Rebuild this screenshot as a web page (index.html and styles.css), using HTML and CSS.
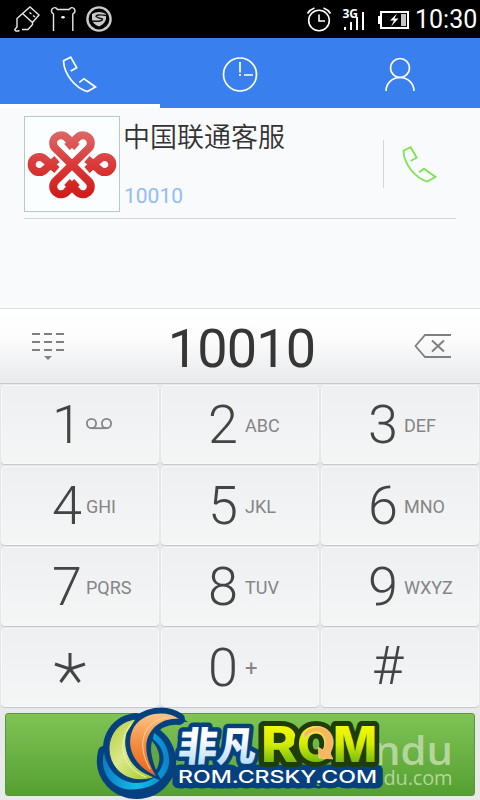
FILE: index.html
```html
<!DOCTYPE html>
<html lang="zh-CN">
<head>
  <meta charset="UTF-8" />
  <meta name="viewport" content="width=device-width, initial-scale=1.0"/>
  <title>Phone</title>
  <link rel="stylesheet" href="styles.css">
</head>
<body>

  <div class="status-bar">
    <svg class="notifications" width="114" height="38" viewBox="0 0 114 38" fill="none" stroke="#e8e8e8" stroke-width="1.4">
      <!-- usb -->
      <path d="M22.5 13.5 L30 7 L39 15 L32.500 22.500 Z M29.500 12.500 l2 1.500 M33 15.500 l2 1.500 M22.500 13.500 L17 18.500 V27 L14.800 29.500 Q15 32 19.500 30.500 M32.500 22.500 V24.500 L28 29.500 H22"/>
      <!-- bear -->
      <path d="M53.500 31 V14 Q50.500 12 52 9 Q55 6 57.500 9.500 H69 Q72 6 74.500 9 Q76 12 72.800 14 V31"/>
      <ellipse cx="63" cy="17.300" rx="1.800" ry="1.200" fill="#fff" stroke="none"/>
      <circle cx="99" cy="19" r="11.600" stroke="#c9c9c9" stroke-width="2.400"/>
      <path d="M92 14 Q99 10 106 14 V19 Q105 24 99 26.500 Q93 24 92 20 Z" fill="#c9c9c9" stroke="none"/>
      <path d="M106.500 15.500 Q96 14 96 16.500 Q98 18 102.500 19 Q103 22 91.500 21" stroke="#111" stroke-width="1.300"/>
    </svg>
    <svg class="system" width="100" height="38" viewBox="312 0 100 38" fill="none" stroke="#fff" stroke-width="1.600">
      <circle cx="319" cy="20.500" r="10.300"/>
      <path d="M319 14.500 V21 H325 M307.500 13.500 Q310 9.500 314.500 8 M323.500 8 Q328 9.500 330.500 13.500"/>
      <text class="network" x="342.500" y="18">3G</text>
      <path d="M345 27 V30 M351 22 V30 M357 17 V30 M363 12 V30" stroke-width="2"/>
      <path d="M381 12 H408 V28 H381 Z" stroke-width="2"/>
      <path d="M379.500 16 V24" stroke-width="3"/>
      <path d="M401 14 H406 V26 H401 Z" fill="#c4c4c4" stroke="none"/>
      <path d="M397 13.500 L390 20.500 H394 L391 26.500 L398.500 18.500 H394.500 Z" fill="#fff" stroke="none"/>
    </svg>
    <span class="time">10:30</span>
  </div>

  <div class="tabs">
    <div class="tab active">
      <svg width="36" height="38" viewBox="0 0 36 38"><path d="M8.700 15 L14.700 11.700 L8.700 1.200 L1.500 4.700 C2 18 13 32 25.300 35.500 L33.500 31 L22 22.700 L17.300 26.300"/></svg>
    </div>
    <div class="tab">
      <svg width="36" height="38" viewBox="0 0 36 38"><circle cx="18" cy="18.500" r="16.500"/><path d="M18 6 V16.500 M18 18 V20 M22 19 H31"/></svg>
    </div>
    <div class="tab">
      <svg width="36" height="38" viewBox="0 0 36 38"><circle cx="18" cy="12" r="9.500"/><path d="M4 35 A14 13.500 0 0 1 32 35"/></svg>
    </div>
  </div>

  <div class="contacts">
    <div class="contact">
      <svg class="avatar" width="94" height="94" viewBox="1 1 94 94" fill="none">
        <defs>
          <linearGradient id="red" gradientUnits="userSpaceOnUse" x1="0" y1="14" x2="0" y2="82">
            <stop offset="0" stop-color="#dd6a6a"/>
            <stop offset="0.500" stop-color="#da3a3a"/>
            <stop offset="1" stop-color="#d01a16"/>
          </linearGradient>
        </defs>
        <g stroke="url(#red)" stroke-width="8" stroke-linejoin="round">
          <path d="M31 32 A7.800 7.800 0 1 1 43 22 L53 31"/>
          <path d="M65 32 A7.800 7.800 0 1 0 53 22 L43 31"/>
          <path d="M31 65.500 A7.800 7.800 0 1 0 43 75.500 L53 66"/>
          <path d="M65 65.500 A7.800 7.800 0 1 1 53 75.500 L43 66"/>
          <path d="M33 54 L21 43.500 A7.600 7.600 0 1 0 21 53.500 L33 43"/>
          <path d="M63 54 L75 43.500 A7.600 7.600 0 1 1 75 53.500 L63 43"/>
        </g>
        <path d="M34 34 L62 63 M62 34 L34 63" stroke="#fbfefe" stroke-width="10.500"/>
        <path d="M30.500 31.500 L65.500 66 M65.500 31.500 L30.500 66" stroke="url(#red)" stroke-width="8"/>
      </svg>
      <div class="info">
        <div class="name">中国联通客服</div>
        <div class="number">10010</div>
      </div>
      <div class="call-icon">
        <svg width="36" height="38" viewBox="0 0 36 38"><path d="M8.700 15 L14.700 11.700 L8.700 1.200 L1.500 4.700 C2 18 13 32 25.300 35.500 L33.500 31 L22 22.700 L17.300 26.300"/></svg>
      </div>
    </div>
  </div>

  <div class="display">
    <svg width="34" height="30" viewBox="0 0 34 30">
      <path d="M0 3 H33 M0 11 H33 M0 19 H33" stroke="#808080" stroke-width="2" stroke-dasharray="8 4"/>
      <path d="M12 25 H20 L16 29 Z" fill="#808080"/>
    </svg>
    <span class="dialed">10010</span>
    <svg width="38" height="26" viewBox="0 0 38 26" fill="none" stroke="#808080" stroke-width="1.800">
      <path d="M37 2 H11 L1.500 13 L11 24 H37"/>
      <path d="M18 7.500 L30 18.500 M30 7.500 L18 18.500" stroke-width="2"/>
    </svg>
  </div>

  <div class="keypad">
    <div class="key"><b>1</b>
      <svg class="voicemail" width="26" height="12" viewBox="0 0 26 12"><circle cx="5.500" cy="5.500" r="4.600"/><circle cx="20.500" cy="5.500" r="4.600"/><path d="M5.500 10.200 H20.500"/></svg>
    </div>
    <div class="key"><b>2</b><span>ABC</span></div>
    <div class="key"><b>3</b><span>DEF</span></div>
    <div class="key"><b>4</b><span>GHI</span></div>
    <div class="key"><b>5</b><span>JKL</span></div>
    <div class="key"><b>6</b><span>MNO</span></div>
    <div class="key"><b>7</b><span>PQRS</span></div>
    <div class="key"><b>8</b><span>TUV</span></div>
    <div class="key"><b>9</b><span>WXYZ</span></div>
    <div class="key">
      <svg class="star" width="32" height="32" viewBox="0 0 32 32"><path d="M16 17 V1 M16 17 L1 12 M16 17 L31 12 M16 17 L6.500 30 M16 17 L25.500 30"/></svg>
    </div>
    <div class="key"><b>0</b><span class="plus">+</span></div>
    <div class="key hash"><b>#</b></div>
  </div>

  <div class="call-row">
    <div class="call-button">
      <svg class="site" width="80" height="60" viewBox="375 732 80 60">
        <text class="site-name" x="375" y="765.500" textLength="79" lengthAdjust="spacingAndGlyphs">ndu</text>
        <text class="site-url" x="384.500" y="786" textLength="69">du.com</text>
      </svg>
    </div>
    <svg class="logo" width="290" height="96" viewBox="95 704 290 96">
      <defs>
        <linearGradient id="lime" x1="0" y1="0" x2="1" y2="1">
          <stop offset="0" stop-color="#b4cc3c"/>
          <stop offset="0.450" stop-color="#dbe88c"/>
          <stop offset="1" stop-color="#9cc516"/>
        </linearGradient>
        <linearGradient id="orange" x1="0.500" y1="0" x2="0.500" y2="1">
          <stop offset="0" stop-color="#fcc487"/>
          <stop offset="0.500" stop-color="#f38b3c"/>
          <stop offset="1" stop-color="#e8641c"/>
        </linearGradient>
        <linearGradient id="blue" x1="0" y1="0" x2="1" y2="0">
          <stop offset="0" stop-color="#0b7dc6"/>
          <stop offset="0.500" stop-color="#12bce6"/>
          <stop offset="1" stop-color="#0a82cc"/>
        </linearGradient>
        <linearGradient id="yellow" gradientUnits="userSpaceOnUse" x1="0" y1="726" x2="0" y2="762">
          <stop offset="0" stop-color="#f4f808"/>
          <stop offset="0.500" stop-color="#d4ec04"/>
          <stop offset="1" stop-color="#78bc10"/>
        </linearGradient>
        <linearGradient id="ice" gradientUnits="userSpaceOnUse" x1="0" y1="-36" x2="0" y2="3">
          <stop offset="0.300" stop-color="#ffffff"/>
          <stop offset="1" stop-color="#b9ddf5"/>
        </linearGradient>
      </defs>

      <!-- crescents -->
      <g stroke="#06417f" stroke-width="12" stroke-linejoin="round">
        <path d="M104 752 C98 776 117 793 137 793 C158 793 172 775 170 758 C168 746 162 738 154 733 L153 739 C162 746 165 755 163 763 C159 778 146 786 134 785 C119 783 107 771 104 752 Z"/>
        <path d="M136 719 C112 722 103 746 113 764 C123 781 142 783 158 776 C137 776 121 755 127 733 Z"/>
        <path d="M179 719 C166 710 144 712 134 727 C123 748 137 768 156 776 C146 760 143 744 150 733 C156 723 167 718 179 719 Z"/>
      </g>
      <path d="M152 741 C161 751 161 762 156 770 C151 757 150 748 152 741 Z" fill="#64a640"/>
      <path d="M104 752 C98 776 117 793 137 789 C158 788 171 772 169 758 C168 746 162 738 154 733 L153 739 C162 746 165 755 163 763 C159 778 146 784 134 783 C119 781 107 771 104 752 Z" fill="url(#blue)"/>
      <path d="M136 719 C112 722 103 746 113 764 C123 781 142 783 158 776 C137 776 121 755 127 733 Z" fill="url(#lime)" stroke="#06417f" stroke-width="1"/>
      <path d="M131 724 C115 745 124 769 146 777" fill="none" stroke="#eef5b4" stroke-width="1"/>
      <path d="M179 719 C166 710 144 712 134 727 C123 748 137 768 156 776 C146 760 143 744 150 733 C156 723 167 718 179 719 Z" fill="url(#orange)" stroke="#06417f" stroke-width="5" paint-order="stroke"/>
      <path d="M170 717 C142 720 136 745 150 769" fill="none" stroke="#fbd4a4" stroke-width="1"/>

      <text class="brand" x="0" y="0" transform="translate(177 761) skewX(-6)" textLength="78" lengthAdjust="spacingAndGlyphs">非凡</text>
      <text class="domain" x="178" y="783" textLength="199" lengthAdjust="spacingAndGlyphs">ROM.CRSKY.COM</text>
      <g class="rom">
        <text x="261" y="762" textLength="37" lengthAdjust="spacingAndGlyphs">R</text>
        <text x="297" y="762" textLength="38" lengthAdjust="spacingAndGlyphs">O</text>
        <text x="333" y="762" textLength="44" lengthAdjust="spacingAndGlyphs">M</text>
      </g>
      <!-- arrow closing the O -->
      <path d="M304 733 C311 725 325 724 331 734 C335 741 333 748 330 753 L333 759 L319 758 L318 747 L323 750 C327 742 325 732 316 732 C310 732 307 735 304 739 Z" fill="#f8b65e" stroke="#fbdcae" stroke-width="0.600"/>
    </svg>
  </div>

</body>
</html>
```
FILE: styles.css
```css
* {
  box-sizing: border-box;
}

body {
  margin: 0;
  width: 480px;
  height: 800px;
  overflow: hidden;
  display: flex;
  flex-direction: column;
  font-family: Roboto, "Noto Sans CJK SC", sans-serif;
  background-color: #e8e9eb;
}

svg {
  display: block;
  flex-shrink: 0;
}

.status-bar {
  height: 38px;
  display: flex;
  align-items: center;
  background-color: #000;
  color: #fff;
}

.system {
  margin-left: auto;
  overflow: visible;
}

.network {
  font: bold 12px "Open Sans", sans-serif;
  fill: #fff;
  stroke: none;
}

.time {
  width: 64px;
  margin: 2px 1px 0 3px;
  font-size: 25px;
  line-height: 36px;
  white-space: nowrap;
}

.tabs {
  height: 70px;
  display: flex;
  background-color: #3a7fee;
}

.tab {
  flex: 1;
  display: flex;
  justify-content: center;
  padding-top: 18px;
}

.tab.active {
  border-bottom: 4px solid #fff;
}

.tab svg {
  fill: none;
  stroke: #fff;
  stroke-width: 1.7;
}

.contacts {
  height: 200px;
  padding: 8px 24px 0;
  background-color: #f9fafc;
}

.contact {
  height: 103px;
  display: flex;
  border-bottom: 1px solid #d2d4d6;
}

.avatar {
  width: 96px;
  height: 96px;
  border: 1px solid #b4c9cd;
  background-color: #fbfefe;
}

.info {
  flex: 1;
  padding-left: 4px;
}

.name {
  height: 68px;
  margin-left: -1px;
  font-size: 27px;
  line-height: 45px;
  color: #333;
  font-weight: 350;
}

.number {
  font-size: 21px;
  line-height: 24px;
  color: #91bcfa;
}

.call-icon {
  width: 73px;
  height: 48px;
  margin-top: 24px;
  padding: 6px 0 0 18px;
  border-left: 1px solid #d4d6d8;
}

.call-icon svg {
  fill: none;
  stroke: #7be455;
  stroke-width: 1.8;
}

.display {
  height: 76px;
  display: flex;
  align-items: center;
  justify-content: space-between;
  padding: 0 28px 0 32px;
  border-top: 1px solid #dcdddf;
  border-bottom: 1px solid #c8cacc;
  background: linear-gradient(#fff, #fdfdfd 35%, #e9eaec);
}

.dialed {
  font-size: 54px;
  line-height: 74px;
  letter-spacing: -0.8px;
  color: #363636;
  margin: 6px 0 0 3px;
}

.keypad {
  display: grid;
  grid-template-columns: repeat(3, 158px);
  grid-auto-rows: 79px;
  gap: 2px;
  padding: 1px 1px 0;
}

.key {
  display: flex;
  align-items: center;
  padding-left: 50px;
  border: 1px solid #f8f9fa;
  border-radius: 4px;
  background: linear-gradient(#eeeff1, #f4f6f6);
  box-shadow: 0 1px 1px #c4c6c8;
}

.key b {
  width: 34px;
  font-size: 54px;
  font-weight: 300;
  line-height: 78px;
  color: #444;
}

.key span {
  padding-top: 2px;
  font-size: 18px;
  color: #858585;
}

.key:nth-child(3n + 2) {
  padding-left: 46px;
}

.key:nth-child(3n + 2) b {
  width: 37px;
}

.key:nth-child(3n) {
  padding-left: 46px;
}

.key:nth-child(3n) b {
  width: 36px;
}

.key.hash {
  padding: 0 0 3px 50px;
}

.key .plus {
  font-size: 22px;
}

.voicemail {
  fill: none;
  stroke: #858585;
  stroke-width: 1.8;
  margin-top: -2px;
}

.star {
  margin-left: 2px;
  fill: none;
  stroke: #444;
  stroke-width: 3;
}

.call-row {
  flex: 1;
  position: relative;
  padding: 6px 5px 3px;
}

.call-button {
  height: 83px;
  display: flex;
  justify-content: flex-end;
  padding: 17px 20px 0 0;
  border: 1px solid #5b963a;
  border-radius: 3px;
  background: linear-gradient(#7fc455, #559f31);
}

.site text {
  fill: #b4d69c;
  font-family: "Open Sans", sans-serif;
}

.site .site-name {
  font-size: 40px;
  font-weight: 600;
}

.site .site-url {
  font-size: 20px;
}

/* logo sits over the call button */
.logo {
  position: absolute;
  left: 95px;
  bottom: 0;
}

.brand {
  font: 900 40px "Noto Sans CJK SC", sans-serif;
  fill: url(#ice);
  stroke: #06417f;
  stroke-width: 9;
  stroke-linejoin: round;
  paint-order: stroke;
}

.domain {
  font: 500 17px Inter, sans-serif;
  fill: #fff;
  stroke: #06417f;
  stroke-width: 11;
  stroke-linejoin: round;
  paint-order: stroke;
}

.rom {
  font: 800 49px Inter, sans-serif;
  fill: url(#yellow);
  stroke: #203c0a;
  stroke-width: 10;
  stroke-linejoin: round;
  paint-order: stroke;
}
```
